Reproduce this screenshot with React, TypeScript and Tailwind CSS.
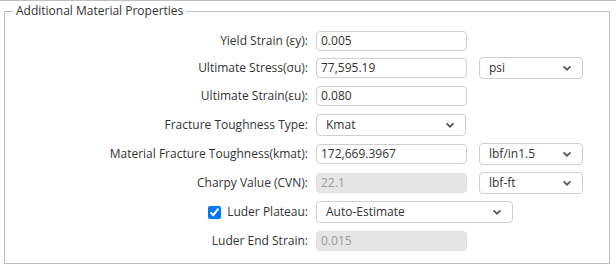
import React from "react";

const font = { fontFamily: '"Open Sans", "Liberation Sans", sans-serif' };

function Chevron() {
  return (
    <svg width="10" height="7" viewBox="0 0 10 7" className="absolute right-[10px] top-1/2 -translate-y-1/2">
      <path d="M1.5 1.8 L5 5.2 L8.5 1.8" fill="none" stroke="#555" strokeWidth="1.7" />
    </svg>
  );
}

function TextInput({ value, disabled, w = "w-[151px]" }: { value: string; disabled?: boolean; w?: string }) {
  return (
    <div
      className={`${w} h-[20px] rounded-[4px] border flex items-center px-[4px] text-[12px] ${
        disabled ? "bg-[#e6e6e6] border-[#e0e0e0] text-[#999]" : "bg-white border-[#cfcfcf] text-[#333]"
      }`}
    >
      {value}
    </div>
  );
}

function Select({ value, w }: { value: string; w: string }) {
  return (
    <div className={`${w} relative h-[22px] rounded-[4px] border border-[#cfcfcf] bg-white flex items-center pl-[9px] text-[12px] text-[#333]`}>
      {value}
      <Chevron />
    </div>
  );
}

function Row({ label, children, mt, check }: { label: string; children: React.ReactNode; mt: string; check?: boolean }) {
  return (
    <div className={`flex items-center h-[22px] ${mt}`}>
      <div className="w-[303px] flex items-center justify-end text-[12px] text-[#333] whitespace-nowrap">
        {check && (
          <input type="checkbox" defaultChecked className="w-[13px] h-[13px] m-0 mr-[6px]" />
        )}
        {label}
      </div>
      <div className="ml-[8px] flex items-center">{children}</div>
    </div>
  );
}

export default function App() {
  return (
    <div className="w-[616px] h-[270px] bg-white border-t border-[#c0c0c0] overflow-hidden" style={font}>
      <fieldset className="ml-[4px] mt-[1px] w-[606px] h-[262px] border border-[#c0c0c0] p-0 m-0 min-w-0">
        <legend className="ml-[8px] px-[3px] text-[12px] leading-[18px] text-[#333]">Additional Material Properties</legend>
        <div className="mt-[10px]">
          <Row label="Yield Strain (εy):" mt="mt-0">
            <TextInput value="0.005" />
          </Row>
          <Row label="Ultimate Stress(σu):" mt="mt-[5px]">
            <TextInput value="77,595.19" />
            <div className="ml-[12px]">
              <Select value="psi" w="w-[104px]" />
            </div>
          </Row>
          <Row label="Ultimate Strain(εu):" mt="mt-[6px]">
            <TextInput value="0.080" />
          </Row>
          <Row label="Fracture Toughness Type:" mt="mt-[7px]">
            <Select value="Kmat" w="w-[150px]" />
          </Row>
          <Row label="Material Fracture Toughness(kmat):" mt="mt-[7px]">
            <TextInput value="172,669.3967" />
            <div className="ml-[12px]">
              <Select value="lbf/in1.5" w="w-[104px]" />
            </div>
          </Row>
          <Row label="Charpy Value (CVN):" mt="mt-[7px]">
            <TextInput value="22.1" disabled />
            <div className="ml-[12px]">
              <Select value="lbf-ft" w="w-[104px]" />
            </div>
          </Row>
          <Row label="Luder Plateau:" mt="mt-[7px]" check>
            <Select value="Auto-Estimate" w="w-[197px]" />
          </Row>
          <Row label="Luder End Strain:" mt="mt-[7px]">
            <TextInput value="0.015" disabled />
          </Row>
        </div>
      </fieldset>
    </div>
  );
}
